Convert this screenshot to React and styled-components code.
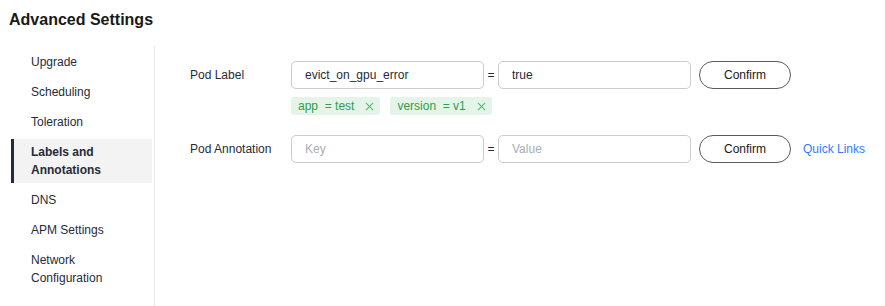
import React from "react";
import styled, { createGlobalStyle } from "styled-components";

const menu = [
  "Upgrade",
  "Scheduling",
  "Toleration",
  "Labels and Annotations",
  "DNS",
  "APM Settings",
  "Network Configuration",
];

const labels = [
  { key: "app", value: "test" },
  { key: "version", value: "v1" },
];

export default function App() {
  return (
    <>
      <GlobalStyle />
      <Page>
        <Title>Advanced Settings</Title>
        <Body>
          <Sidebar>
            {menu.map((item) => (
              <MenuItem key={item} $active={item === "Labels and Annotations"}>
                {item}
              </MenuItem>
            ))}
          </Sidebar>
          <Form>
            <Row>
              <FieldLabel>Pod Label</FieldLabel>
              <Field>
                <Inputs>
                  <Input defaultValue="evict_on_gpu_error" />
                  <Equals>=</Equals>
                  <Input defaultValue="true" />
                  <ConfirmButton>Confirm</ConfirmButton>
                </Inputs>
                <Tags>
                  {labels.map((l) => (
                    <Tag key={l.key}>
                      {l.key}
                      {"\u00a0 = "}
                      {l.value}
                      <CloseIcon viewBox="0 0 10 10">
                        <path d="M1 1L9 9M9 1L1 9" />
                      </CloseIcon>
                    </Tag>
                  ))}
                </Tags>
              </Field>
            </Row>
            <Row>
              <FieldLabel>Pod Annotation</FieldLabel>
              <Field>
                <Inputs>
                  <Input placeholder="Key" />
                  <Equals>=</Equals>
                  <Input placeholder="Value" />
                  <ConfirmButton>Confirm</ConfirmButton>
                  <Link href="#">Quick Links</Link>
                </Inputs>
              </Field>
            </Row>
          </Form>
        </Body>
      </Page>
    </>
  );
}

// Styled Components

const GlobalStyle = createGlobalStyle`
  body {
    margin: 0;
    font-family: "Liberation Sans", Arial, sans-serif;
    color: #252b3a;
    background: #fff;
  }
`;

const Page = styled.div`
  height: 306px;
  display: flex;
  flex-direction: column;
  overflow: hidden;
`;

const Title = styled.h1`
  margin: 0;
  padding: 11px 9px 0;
  font-size: 16px;
  line-height: 18px;
  font-weight: 700;
  color: #191919;
`;

const Body = styled.div`
  display: flex;
  flex: 1;
  margin-top: 17px;
`;

const Sidebar = styled.ul`
  margin: 0;
  padding: 3px 0 0 11px;
  width: 141px;
  list-style: none;
  display: flex;
  flex-direction: column;
  gap: 4px;
`;

const MenuItem = styled.li`
  padding: 4px 8px 4px 17px;
  font-size: 12px;
  line-height: 18px;
  border-left: 3px solid ${({ $active }) => ($active ? "#252b3a" : "transparent")};
  background: ${({ $active }) => ($active ? "#f3f3f3" : "transparent")};
  font-weight: ${({ $active }) => ($active ? 700 : 400)};
  color: #252b3a;
`;

const Form = styled.div`
  margin-left: 2px;
  border-left: 1px solid #e8e8e8;
  padding: 15px 0 0 35px;
  display: flex;
  flex-direction: column;
  gap: 20px;
  flex: 1;
`;

const Row = styled.div`
  display: flex;
  align-items: flex-start;
`;

const FieldLabel = styled.div`
  width: 101px;
  font-size: 12px;
  line-height: 28px;
  color: #252b3a;
`;

const Field = styled.div`
  display: flex;
  flex-direction: column;
  gap: 8px;
`;

const Inputs = styled.div`
  display: flex;
  align-items: center;
`;

const Input = styled.input`
  box-sizing: border-box;
  width: 193px;
  height: 28px;
  padding: 0 13px;
  border: 1px solid #cbcbcb;
  border-radius: 5px;
  font-family: inherit;
  font-size: 12px;
  color: #252b3a;
  outline: none;

  &::placeholder {
    color: #a9adb4;
  }
`;

const Equals = styled.span`
  width: 14px;
  text-align: center;
  font-size: 12px;
`;

const ConfirmButton = styled.button`
  box-sizing: border-box;
  margin-left: 8px;
  width: 92px;
  height: 28px;
  border: 1px solid #5a5a5a;
  border-radius: 14px;
  background: #fff;
  font-family: inherit;
  font-size: 12px;
  color: #191919;
`;

const Link = styled.a`
  margin-left: 12px;
  font-size: 12px;
  color: #2e7cf6;
  text-decoration: none;
`;

const Tags = styled.div`
  display: flex;
  gap: 10px;
`;

const Tag = styled.span`
  display: inline-flex;
  align-items: center;
  height: 18px;
  padding: 0 6px 0 7px;
  border-radius: 3px;
  background: #e5f4e9;
  color: #2e9e49;
  font-size: 12px;
  white-space: pre;
`;

const CloseIcon = styled.svg`
  width: 9px;
  height: 9px;
  margin-left: 11px;
  fill: none;
  stroke: #5cb874;
  stroke-width: 1.2;
`;
